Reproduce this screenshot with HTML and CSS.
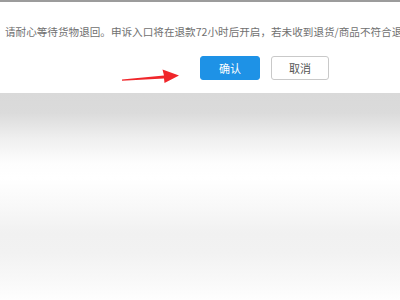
FILE: index.html
```html
<!DOCTYPE html>
<html lang="zh">
<head>
<meta charset="utf-8">
<link rel="stylesheet" href="styles.css">
</head>
<body>
<div class="dialog">
  <p class="msg">请耐心等待货物退回。申诉入口将在退款72小时后开启，若未收到退货/商品不符合退货要求，可发起申诉</p>
  <div class="actions">
    <svg class="arrow" width="62" height="24" viewBox="0 0 62 24">
      <path d="M1 15.5 L43 11.5 L41.5 5.5 L58 11.5 L43.5 19 L43 14.5 L1 16.8 Z" fill="#f0262a"/>
    </svg>
    <button class="btn primary">确认</button>
    <button class="btn">取消</button>
  </div>
</div>
<div class="backdrop"></div>
</body>
</html>
```
FILE: styles.css
```css
html, body {
  margin: 0;
  padding: 0;
  width: 400px;
  height: 300px;
  overflow: hidden;
  background: #ffffff;
  font-family: "Noto Sans CJK SC", "Noto Sans", sans-serif;
}
.dialog {
  background: #ffffff;
  border-top: 2px solid #9c9c9c;
  height: 91px;
  box-sizing: content-box;
}
.msg {
  margin: 0;
  padding: 23px 0 0 5px;
  font-size: 10.6px;
  line-height: 14px;
  color: #707070;
  white-space: nowrap;
  overflow: hidden;
}
.actions {
  position: relative;
  display: flex;
  gap: 11px;
  padding: 17px 0 0 200px;
}
.arrow {
  position: absolute;
  left: 121px;
  top: 25px;
}
.btn {
  width: 60px;
  height: 24px;
  border-radius: 3px;
  border: 1px solid #c9c9c9;
  background: #ffffff;
  color: #555;
  font-family: "Noto Sans CJK SC", sans-serif;
  font-size: 11px;
  padding: 0;
  box-sizing: border-box;
}
.btn + .btn { width: 58px; }
.btn.primary {
  background: #1e92e6;
  border-color: #1e92e6;
  color: #ffffff;
}
.backdrop {
  height: 207px;
  background: linear-gradient(to bottom,
    #d9d9d9 0px,
    #dbdbdb 20px,
    #efefef 45px,
    #fdfdfd 70px,
    #ffffff 85px,
    #f8f8f8 115px,
    #f1f1f1 140px,
    #f2f2f2 160px,
    #f8f8f8 185px,
    #fefefe 207px);
}
```
